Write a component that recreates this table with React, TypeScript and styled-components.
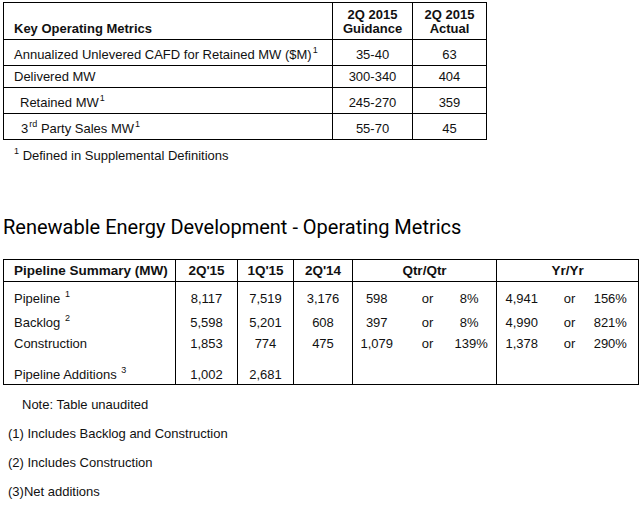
import React from 'react';
import styled, { createGlobalStyle } from 'styled-components';

const GlobalStyle = createGlobalStyle`
  html, body {
    margin: 0;
    padding: 0;
    background: #ffffff;
  }
  body {
    font-family: "Liberation Sans", Arial, sans-serif;
    font-size: 13px;
    color: #111;
  }
`;

const Page = styled.div`
  width: 642px;
  padding: 2px 0 0 3px;
  box-sizing: border-box;
`;

const MetricsTable = styled.table`
  border-collapse: collapse;
  width: 484px;
  table-layout: fixed;
  border: 1px solid #000;
`;

const MCell = styled.td<{ $align?: 'left' | 'center'; $indent?: number; $bold?: boolean }>`
  border: 1px solid #000;
  padding: 0 0 3px ${p => p.$indent ?? 10}px;
  text-align: ${p => p.$align ?? 'left'};
  vertical-align: bottom;
  font-weight: ${p => (p.$bold ? 700 : 400)};
  line-height: 14px;
  white-space: nowrap;
`;

const MRow = styled.tr<{ $h: number }>`
  height: ${p => p.$h}px;
`;

const Sup = styled.sup`
  font-size: 9px;
  line-height: 0;
  vertical-align: 6px;
  margin-left: 1px;
`;

const Footnote = styled.div`
  margin: 9px 0 0 10px;
  line-height: 14px;
`;

const Title = styled.h2`
  margin: 52px 0 0 0;
  font-family: Roboto, "Liberation Sans", sans-serif;
  font-weight: 400;
  font-size: 20px;
  line-height: 24px;
  color: #000;
`;

const PipelineTable = styled.table`
  margin-top: 20px;
  border-collapse: collapse;
  width: 636px;
  table-layout: fixed;
  border: 1px solid #000;
`;

const PHead = styled.th<{ $divider?: boolean; $left?: boolean }>`
  height: 21px;
  padding: 0 0 0 ${p => (p.$left ? 10 : 0)}px;
  text-align: ${p => (p.$left ? 'left' : 'center')};
  font-weight: 700;
  font-size: 13.5px;
  border-bottom: 1px solid #000;
  border-left: ${p => (p.$divider ? '1px solid #000' : 'none')};
  white-space: nowrap;
`;

const PCell = styled.td<{ $divider?: boolean; $left?: boolean; $pr?: number }>`
  padding: 0 ${p => p.$pr ?? 0}px 2px ${p => (p.$left ? 10 : 0)}px;
  text-align: ${p => (p.$left ? 'left' : 'center')};
  vertical-align: bottom;
  line-height: 14px;
  border-left: ${p => (p.$divider ? '1px solid #000' : 'none')};
  white-space: nowrap;
`;

const PRow = styled.tr<{ $h: number }>`
  height: ${p => p.$h}px;
`;

const Notes = styled.div`
  margin-top: 13px;
  display: flex;
  flex-direction: column;
  gap: 15px;
  line-height: 14px;
`;

const Note = styled.div<{ $indent: number }>`
  padding-left: ${p => p.$indent}px;
`;

const metrics = [
  { label: 'Annualized Unlevered CAFD for Retained MW ($M)', sup: '1', indent: 10, g: '35-40', a: '63', h: 26 },
  { label: 'Delivered MW', indent: 10, g: '300-340', a: '404', h: 22 },
  { label: 'Retained MW', sup: '1', indent: 16, g: '245-270', a: '359', h: 26 },
  { label: 'Party Sales MW', pre: '3', preSup: 'rd', sup: '1', indent: 17, g: '55-70', a: '45', h: 26 },
];

const pipeline = [
  { label: 'Pipeline', sup: '1', q2: '8,117', q1: '7,519', p: '3,176', qq: ['598', 'or', '8%'], yy: ['4,941', 'or', '156%'], h: 26 },
  { label: 'Backlog', sup: '2', q2: '5,598', q1: '5,201', p: '608', qq: ['397', 'or', '8%'], yy: ['4,990', 'or', '821%'], h: 24 },
  { label: 'Construction', q2: '1,853', q1: '774', p: '475', qq: ['1,079', 'or', '139%'], yy: ['1,378', 'or', '290%'], h: 21 },
  { label: 'Pipeline Additions', sup: '3', q2: '1,002', q1: '2,681', p: '', qq: ['', '', ''], yy: ['', '', ''], h: 32 },
];

export default function App() {
  return (
    <Page>
      <GlobalStyle />
      <MetricsTable>
        <colgroup>
          <col style={{ width: 329 }} />
          <col style={{ width: 80 }} />
          <col style={{ width: 74 }} />
        </colgroup>
        <tbody>
          <MRow $h={37}>
            <MCell $bold>Key Operating Metrics</MCell>
            <MCell $bold $align="center" $indent={0}>2Q 2015<br />Guidance</MCell>
            <MCell $bold $align="center" $indent={0}>2Q 2015<br />Actual</MCell>
          </MRow>
          {metrics.map(m => (
            <MRow key={m.label} $h={m.h}>
              <MCell $indent={m.indent}>
                {m.pre}
                {m.preSup && <Sup>{m.preSup}</Sup>}
                {m.pre ? ' ' : ''}
                {m.label}
                {m.sup && <Sup>{m.sup}</Sup>}
              </MCell>
              <MCell $align="center" $indent={0}>{m.g}</MCell>
              <MCell $align="center" $indent={0}>{m.a}</MCell>
            </MRow>
          ))}
        </tbody>
      </MetricsTable>
      <Footnote>
        <Sup>1</Sup> Defined in Supplemental Definitions
      </Footnote>
      <Title>Renewable Energy Development - Operating Metrics</Title>
      <PipelineTable>
        <colgroup>
          <col style={{ width: 172 }} />
          <col style={{ width: 62 }} />
          <col style={{ width: 56 }} />
          <col style={{ width: 59 }} />
          <col style={{ width: 48 }} />
          <col style={{ width: 54 }} />
          <col style={{ width: 42 }} />
          <col style={{ width: 50 }} />
          <col style={{ width: 46 }} />
          <col style={{ width: 46 }} />
        </colgroup>
        <thead>
          <tr>
            <PHead $left>Pipeline Summary (MW)</PHead>
            <PHead $divider>2Q'15</PHead>
            <PHead $divider>1Q'15</PHead>
            <PHead $divider>2Q'14</PHead>
            <PHead $divider colSpan={3}>Qtr/Qtr</PHead>
            <PHead $divider colSpan={3}>Yr/Yr</PHead>
          </tr>
        </thead>
        <tbody>
          {pipeline.map(r => (
            <PRow key={r.label} $h={r.h}>
              <PCell $left>
                {r.label}
                {r.sup && <> <Sup>{r.sup}</Sup></>}
              </PCell>
              <PCell $divider>{r.q2}</PCell>
              <PCell $divider>{r.q1}</PCell>
              <PCell $divider>{r.p}</PCell>
              <PCell $divider>{r.qq[0]}</PCell>
              <PCell>{r.qq[1]}</PCell>
              <PCell $pr={12}>{r.qq[2]}</PCell>
              <PCell $divider>{r.yy[0]}</PCell>
              <PCell>{r.yy[1]}</PCell>
              <PCell $pr={10}>{r.yy[2]}</PCell>
            </PRow>
          ))}
        </tbody>
      </PipelineTable>
      <Notes>
        <Note $indent={19}>Note: Table unaudited</Note>
        <Note $indent={5}>(1) Includes Backlog and Construction</Note>
        <Note $indent={5}>(2) Includes Construction</Note>
        <Note $indent={5}>(3)Net additions</Note>
      </Notes>
    </Page>
  );
}
